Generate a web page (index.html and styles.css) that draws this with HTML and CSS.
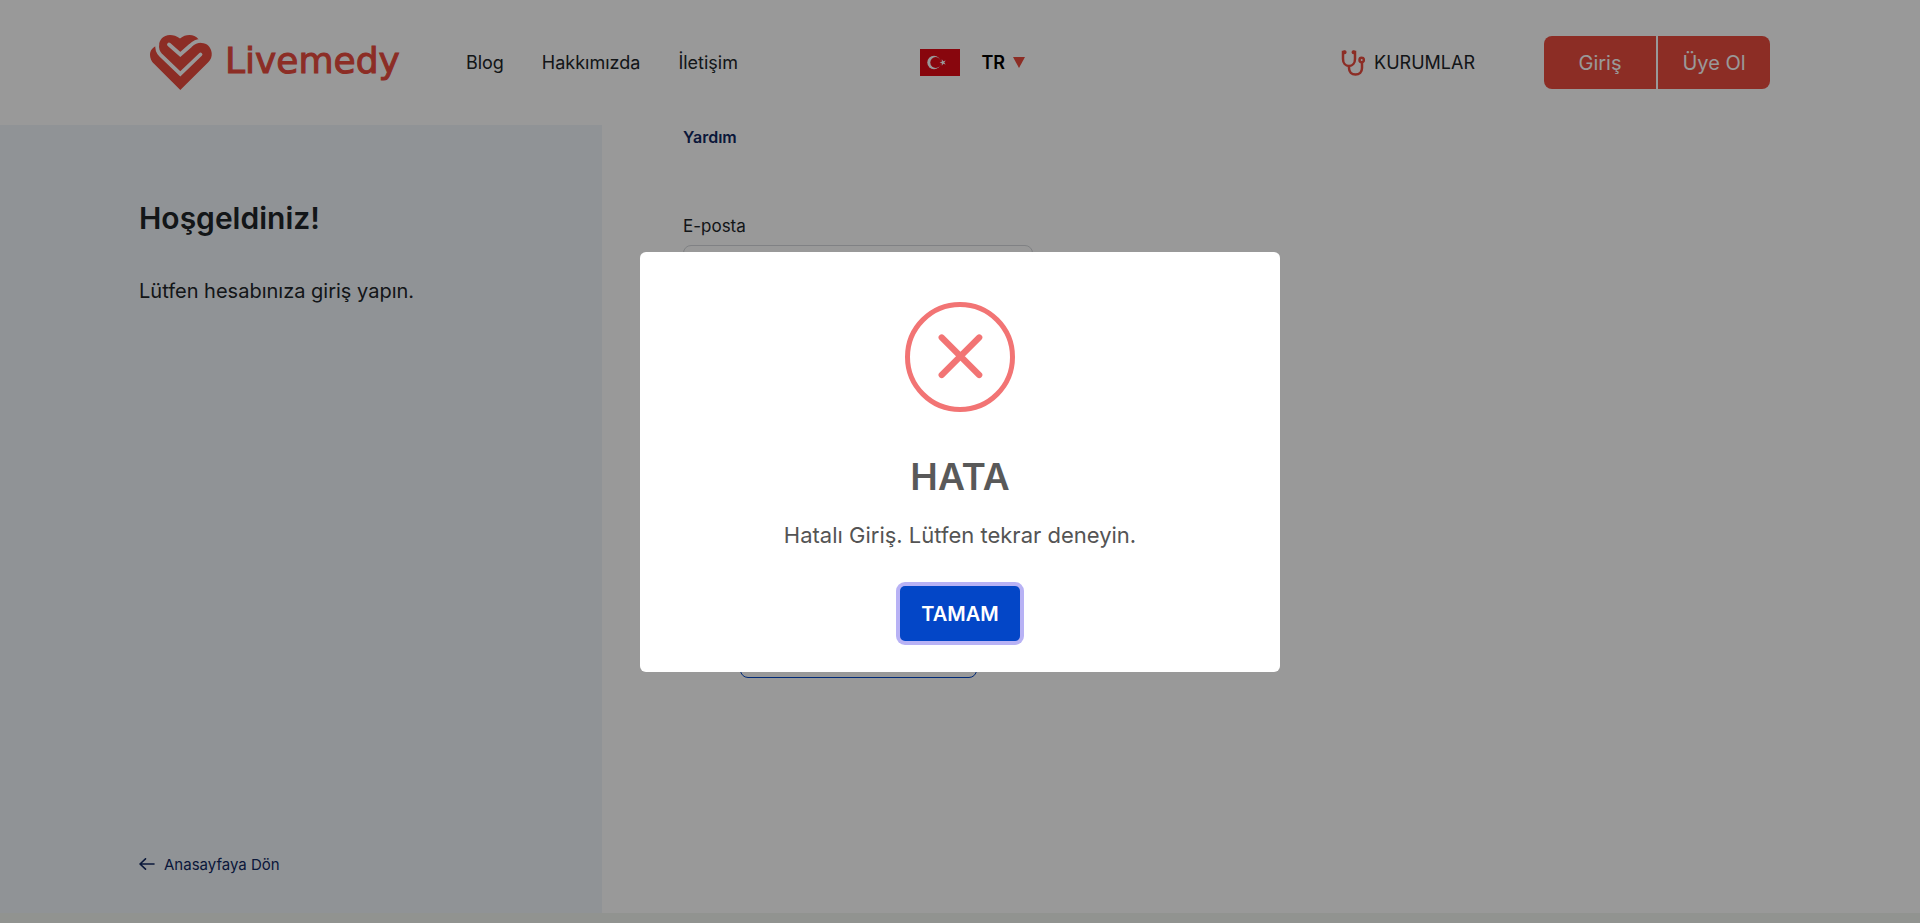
FILE: index.html
```html
<!DOCTYPE html>
<html lang="tr">
<head>
<meta charset="utf-8">
<meta name="viewport" content="width=device-width, initial-scale=1">
<title>Livemedy</title>
<link rel="stylesheet" href="styles.css">
</head>
<body>
<div class="page">
  <header class="header">
    <a class="logo" href="#">
      <svg class="logo-mark" viewBox="0 0 62 56" aria-hidden="true">
        <mask id="grooves">
          <rect width="62" height="56" fill="#fff"/>
          <g fill="none" stroke="#000" stroke-width="3.800" stroke-linecap="round">
            <path d="M19 9.500 30.300 19.500 40.500 10.500C44 7 48 5.500 53 6"/>
            <path d="M50.500 19.500 30.300 38.800 11 20.500C7.500 17 6.500 14 7.300 9"/>
          </g>
        </mask>
        <path mask="url(#grooves)" fill="currentColor" d="M5 11.500C1 14 0 17 0 20S1.500 26.500 4 28.800L30.300 55 58 27.500C61 24.500 62 21.500 61.700 18 61 12 57 8 51.500 8L48.500 4.300C46 1 43 0 39.500 0 36 0 33 1 30 3.500 27 1 23 0 20 0 13 0 9 5 9 11Z"/>
      </svg>
      <span class="logo-text">Livemedy</span>
    </a>
    <nav class="nav">
      <a href="#">Blog</a>
      <a href="#">Hakkımızda</a>
      <a href="#">İletişim</a>
    </nav>
    <button class="lang" type="button">
      <svg class="flag" viewBox="0 0 40 27" aria-hidden="true">
        <rect width="40" height="27" fill="#e30a17"/>
        <circle cx="14" cy="13.500" r="6.700" fill="#fff"/>
        <circle cx="15.700" cy="13.500" r="5.400" fill="#e30a17"/>
        <path fill="#fff" d="m19.500 13.500 2.300-.8v-2.500l1.500 2 2.400-.8-1.500 2.100 1.500 2.100-2.400-.8-1.500 2v-2.500z"/>
      </svg>
      <span>TR</span>
      <span class="caret"></span>
    </button>
    <a class="clinics" href="#">
      <svg class="stethoscope" viewBox="0 0 24 26" fill="none" stroke="currentColor" stroke-width="2.500" stroke-linecap="round" aria-hidden="true">
        <path d="M4 2H2v7c0 4 2.500 7 6 7s6-3 6-7V2h-2M8 16v2c0 4 2.700 6.500 6.500 6.500S21 22 21 18v-5"/>
        <circle cx="20.700" cy="10" r="2.200"/>
        <path stroke-width="4" d="M3.500 2.300h.1M12.600 2.300h.1"/>
      </svg>
      <span>KURUMLAR</span>
    </a>
    <div class="account">
      <a href="#">Giriş</a>
      <a href="#">Üye Ol</a>
    </div>
  </header>
  <div class="columns">
    <aside class="welcome">
      <h1>Hoşgeldiniz!</h1>
      <p>Lütfen hesabınıza giriş yapın.</p>
      <a class="back" href="#">
        <svg viewBox="0 0 16 14" fill="none" stroke="currentColor" stroke-width="1.600" stroke-linecap="round" stroke-linejoin="round" aria-hidden="true"><path d="M15 6H1M6.500.8 1 6l5.500 5.200"/></svg>
        <span>Anasayfaya Dön</span>
      </a>
    </aside>
    <main class="login">
      <a class="help" href="#">Yardım</a>
      <form class="form">
        <label for="email">E-posta</label>
        <input id="email" type="email">
        <button class="outline" type="button" aria-label="Üye Ol"></button>
      </form>
    </main>
  </div>
  <footer class="footer"></footer>
</div>
<div class="overlay">
  <div class="modal" role="dialog" aria-modal="true" aria-labelledby="modal-title">
    <svg class="error" viewBox="0 0 110 110" fill="none" stroke="currentColor" aria-hidden="true">
      <circle cx="55" cy="55" r="52.500" stroke-width="5"/>
      <path stroke-width="6.250" stroke-linecap="round" d="m36.700 35.500 37.500 37.500m0-37.500-37.500 37.500"/>
    </svg>
    <h2 id="modal-title">HATA</h2>
    <p>Hatalı Giriş. Lütfen tekrar deneyin.</p>
    <button class="confirm" type="button">TAMAM</button>
  </div>
</div>
</body>
</html>
```

FILE: styles.css
```css
* { box-sizing: border-box; }
body {
  margin: 0;
  font-family: Inter, "Liberation Sans", sans-serif;
  font-size: 18px;
  color: #212529;
  background: #fff;
}
a { color: inherit; text-decoration: none; }
h1, h2, p { margin: 0; }
button { font: inherit; }
.page {
  display: flex;
  flex-direction: column;
  height: 100vh;
  overflow: hidden;
}
.header {
  display: flex;
  align-items: center;
  flex: none;
  height: 125px;
  padding: 0 150px;
}
.logo {
  display: flex;
  align-items: center;
  gap: 13px;
  color: #ea4b3e;
}
.logo-mark { width: 62px; height: 56px; }
.logo-text {
  padding-bottom: 4px;
  font-family: "DejaVu Sans", sans-serif;
  font-size: 36px;
  line-height: 48px;
  -webkit-text-stroke: 1px currentColor;
}
.nav { display: flex; gap: 38px; margin-left: 66px; }
.lang {
  display: flex;
  align-items: center;
  margin-left: auto;
  padding: 0;
  border: 0;
  background: none;
  font-weight: 600;
  color: #000;
}
.flag { width: 40px; height: 27px; margin-right: 21px; }
.caret {
  margin-left: 8px;
  border: 6px solid transparent;
  border-top: 11px solid #ea4b3e;
  border-bottom: 0;
}
.clinics { display: flex; align-items: center; gap: 9px; margin-left: 316px; }
.stethoscope { width: 24px; height: 26px; color: #ea4b3e; }
.account { display: flex; gap: 2px; margin-left: 69px; }
.account a {
  width: 112px;
  padding-top: 1px;
  background: #ea4b3e;
  color: #fff;
  font-size: 20px;
  line-height: 52px;
  text-align: center;
}
.account a:first-child { border-radius: 8px 0 0 8px; }
.account a:last-child { border-radius: 0 8px 8px 0; }
.columns { display: flex; flex: 1; min-height: 0; }
.welcome {
  display: flex;
  flex-direction: column;
  flex: none;
  width: 602px;
  padding: 72px 40px 36px 139px;
  background: #f0f6fb;
}
.welcome h1 { font-size: 30px; line-height: 42px; font-weight: 600; }
.welcome p { margin-top: 37px; font-size: 20px; line-height: 30px; }
.back {
  display: flex;
  align-items: center;
  gap: 9px;
  margin-top: auto;
  font-size: 15px;
  line-height: 24px;
  color: #112861;
}
.back svg { width: 16px; height: 14px; }
.login { flex: 1; padding: 0 81px; }
.help {
  display: block;
  line-height: 24px;
  font-size: 16px;
  font-weight: 600;
  color: #112861;
}
.form {
  display: flex;
  flex-direction: column;
  width: 350px;
  margin-top: 65px;
}
.form label { font-size: 17px; line-height: 24px; }
.form input {
  height: 50px;
  margin-top: 7px;
  border: 1px solid #d5d8dc;
  border-radius: 8px;
  background: #fff;
}
.outline {
  align-self: center;
  width: 237px;
  height: 50px;
  margin-top: 333px;
  border: 1px solid #0346c7;
  border-radius: 8px;
  background: #fff;
}
.footer { flex: none; height: 10px; background: #f2f5f0; }
.overlay {
  position: fixed;
  inset: 0;
  display: flex;
  align-items: center;
  justify-content: center;
  background: rgba(0, 0, 0, .4);
}
.modal {
  display: flex;
  flex-direction: column;
  align-items: center;
  width: 640px;
  padding: 50px 25px 31px;
  border-radius: 6px;
  background: #fff;
  color: #545454;
}
.error { width: 110px; height: 110px; color: #f27474; }
.modal h2 { margin-top: 42px; font-size: 37px; line-height: 46px; font-weight: 600; color: #595959; }
.modal p { margin-top: 18px; font-size: 22px; line-height: 34px; }
.confirm {
  height: 55px;
  width: 120px;
  margin-top: 34px;
  padding: 2px 0 0;
  border: 0;
  border-radius: 5px;
  box-shadow: 0 0 0 4px #b8b2f5;
  background: #0346c7;
  color: #fff;
  font-size: 20px;
  font-weight: 600;
}
```
